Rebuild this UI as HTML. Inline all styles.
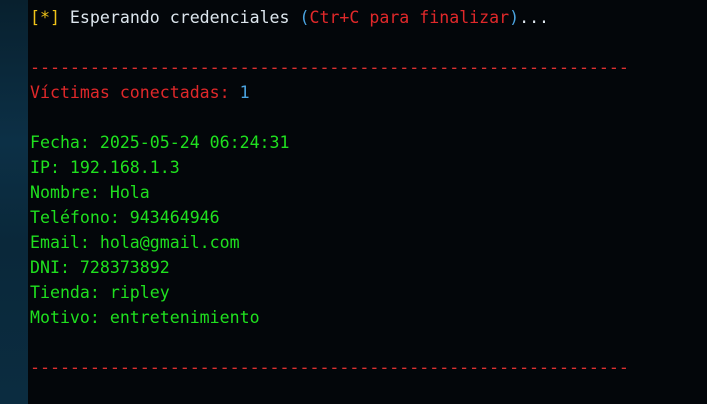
<!DOCTYPE html>
<html><head><meta charset="utf-8"><style>
html,body{margin:0;padding:0;width:707px;height:404px;overflow:hidden;background:#03060a;}
.side{position:absolute;left:0;top:0;width:28px;height:404px;background:linear-gradient(180deg,#08202e 0%,#0c3046 35%,#0a283a 60%,#0b2c40 100%);}
.t{position:absolute;left:30px;top:5px;font-family:"DejaVu Sans Mono","Liberation Mono",monospace;font-size:16.58px;line-height:25px;white-space:pre;color:#e0e0e0;}
.y{color:#f0c419}.r{color:#e0282a}.b{color:#4aa3e0}.g{color:#1fe01f}.w{color:#dde6ee}.d{color:#e03030}
</style></head><body>
<div class="side"></div>
<div class="t"><span class="y">[*]</span><span class="w"> Esperando credenciales </span><span class="b">(</span><span class="r">Ctr+C para finalizar</span><span class="b">)</span><span class="w">...</span>

<span class="d">------------------------------------------------------------</span>
<span class="r">Víctimas conectadas: </span><span class="b">1</span>

<span class="g">Fecha: 2025-05-24 06:24:31
IP: 192.168.1.3
Nombre: Hola
Teléfono: 943464946
Email: hola@gmail.com
DNI: 728373892
Tienda: ripley
Motivo: entretenimiento</span>

<span class="d">------------------------------------------------------------</span></div>
</body></html>
